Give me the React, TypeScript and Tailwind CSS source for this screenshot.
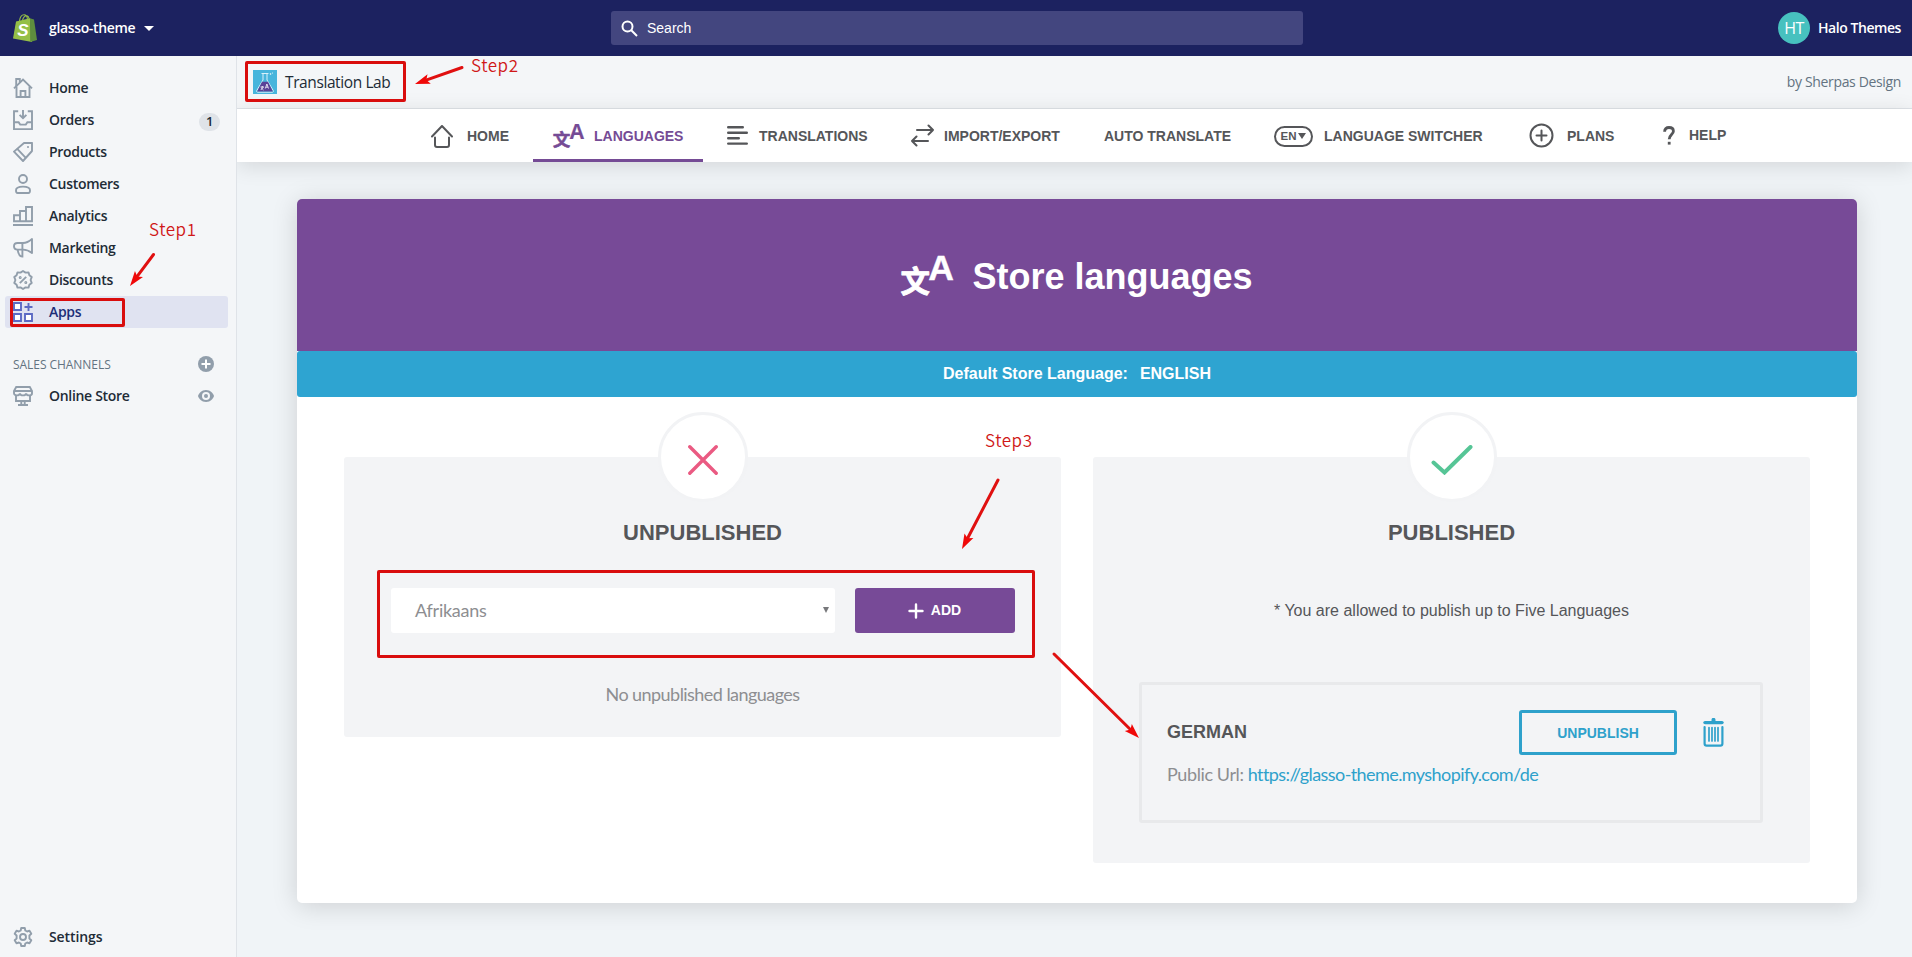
import React from "react";

type IconProps = { className?: string };

const Stroke = ({ children, className = "text-[#919eab]" }: { children: React.ReactNode; className?: string }) => (
  <svg viewBox="0 0 20 20" className={`h-5 w-5 shrink-0 ${className}`} fill="none" stroke="currentColor" strokeWidth="1.9">
    {children}
  </svg>
);

const HomeIcon = () => (
  <Stroke>
    <path d="M1 10.4 10 1.6l9 8.8" />
    <path d="M3.5 8.5V19h13V8.5" />
    <path d="M7.6 19v-6h4.8v6" />
    <path d="M3.2 8V1h3.6v3.6" />
  </Stroke>
);
const OrdersIcon = () => (
  <Stroke>
    <path d="M5.2 1.2H1v17.9h18V1.2h-4.2" />
    <path d="M10 0v7.6M6.6 4.8 10 8.2l3.4-3.4" />
    <path d="M1 12.2h4.6l1.6 2.4h5.6l1.6-2.4H19" />
  </Stroke>
);
const ProductsIcon = () => (
  <Stroke>
    <path d="m11 1 8-.1V9L10 19 1 9.6z" strokeLinejoin="round" />
    <path d="m4 6.6 8.8 9.2" />
    <circle cx="15" cy="5" r=".6" fill="currentColor" strokeWidth="1" />
  </Stroke>
);
const CustomersIcon = () => (
  <Stroke>
    <circle cx="10" cy="5" r="4" />
    <path d="M3 16.2c0-2.4 3.2-3.6 7-3.6s7 1.200 7 3.600c0 1.700-.6 2.800-1.600 2.800H4.600C3.600 19 3 17.900 3 16.200z" />
  </Stroke>
);
const AnalyticsIcon = () => (
  <Stroke>
    <path d="M0 19h20M1 15.200V9.200h6v6zM7 15.200V5h6v10.200zM13 15.200V1h6v14.200z" />
  </Stroke>
);
const MarketingIcon = () => (
  <Stroke>
    <path d="M19 1v14c-3-2.400-5.600-3.400-9-3.400H4.600C2.400 11.600 1 10.200 1 8.300S2.400 5 4.600 5H10c3.400 0 6-1.400 9-4z" strokeLinejoin="round" />
    <path d="M9.400 5v13.600C6.800 18.600 5.200 15.600 4.600 11.600" />
  </Stroke>
);
const DiscountsIcon = () => (
  <Stroke>
    <path d="m10 1 2.500 1.600 3-.2.900 2.800 2.300 1.900-1.100 2.900 1.100 2.900-2.300 1.900-.9 2.800-3-.2L10 19l-2.500-1.600-3 .2-.9-2.800-2.300-1.900L2.400 10 1.300 7.100l2.300-1.900.9-2.800 3 .2z" strokeLinejoin="round" />
    <path d="m6.800 13.200 6.400-6.400" />
    <circle cx="7.200" cy="7.400" r=".9" strokeWidth="1.200" />
    <circle cx="12.800" cy="12.600" r=".9" strokeWidth="1.200" />
  </Stroke>
);
const AppsIcon = () => (
  <Stroke className="text-[#5c6ac4]">
    <path d="M1 1h7v7H1zM1 12h7v7H1zM12 12h7v7h-7z" fill="#fff" />
    <path d="M15.500 1v8M11.500 5h8" />
  </Stroke>
);
const StoreIcon = () => (
  <Stroke>
    <path d="M3.200 1h13.600L19 5v2.200c0 1.400-1.200 2.200-2.800 2.200-1.500 0-2.800-.8-3.100-2-.3 1.200-1.600 2-3.100 2s-2.800-.8-3.100-2c-.3 1.200-1.600 2-3.100 2C2.200 9.400 1 8.600 1 7.200V5z" />
    <path d="M1 5h18M3 9.400V15h14V9.400M8.300 15v3.600M11.700 15v3.600M5 19h10" />
  </Stroke>
);
const SettingsIcon = () => (
  <Stroke>
    <path d="M8.200 1h3.600l.5 2.500 1.800 1 2.400-.8 1.800 3.100-1.900 1.700v3l1.900 1.700-1.800 3.100-2.400-.8-1.800 1-.5 2.500H8.200l-.5-2.500-1.800-1-2.400.8-1.800-3.100 1.900-1.700v-3L1.700 6.800l1.800-3.100 2.400.8 1.800-1z" strokeLinejoin="round" />
    <circle cx="10" cy="10" r="3" />
  </Stroke>
);

const LanguageGlyph = ({ className }: IconProps) => (
  <svg viewBox="0 0 52 43" className={`overflow-visible ${className}`} fill="currentColor">
    <text x="-.5" y="38" fontSize="29.500" fontWeight="700" fontFamily="'Noto Sans CJK SC', sans-serif" stroke="currentColor" strokeWidth=".8" strokeLinejoin="round">文</text>
    <text x="27.200" y="26" fontSize="35.500" fontWeight="700" fontFamily="'Liberation Sans', sans-serif" stroke="currentColor" strokeWidth=".4">A</text>
  </svg>
);

const ShopBag = () => (
  <svg viewBox="0 0 24 28" className="h-7 w-6 shrink-0">
    <path d="M6.500 7C7 3 9 .8 11 .8s3.300 1.700 3.500 5M9.500 6.500C10 3.500 12 1.200 14 1.800c1.400.5 2 2 2.200 3.400" fill="none" stroke="#95bf47" strokeWidth="1.100" />
    <path d="M3 7.600 17 4.200 19 28 0 24.600z" fill="#95bf47" />
    <path d="m17 4.200 4 1.400L24 26l-6.800 2z" fill="#5e8e3e" />
    <text x="4.300" y="22.300" fontSize="17" fontWeight="700" fontStyle="italic" fill="#fff" fontFamily="'Liberation Sans', sans-serif">S</text>
  </svg>
);

const FlaskLogo = () => (
  <svg viewBox="0 0 24 24" className="h-6 w-6 shrink-0">
    <rect width="24" height="24" fill="#47b5dc" />
    <path d="M8.500 3.500h7M10 3.500V10L3.800 20.500c-.5 1 0 1.700 1 1.700h14.400c1 0 1.500-.7 1-1.700L14 10V3.500" fill="none" stroke="#d9f1fa" strokeWidth="1" />
    <path d="M9 11.800h6l4.900 9.600H4.100z" fill="#5b4397" />
    <path d="M7.500 17h3.500M9.300 16v1M7.800 20l2.500-3M8 17.600l2.500 2.400M12.300 18.500l1.600-4.500 1.600 4.500M12.900 17.200h2" stroke="#fff" strokeWidth=".8" fill="none" />
    <circle cx="17.500" cy="4" r=".8" fill="#fff" />
    <circle cx="19.500" cy="3" r=".5" fill="#fff" />
  </svg>
);

const SIDE = [
  { label: "Home", icon: <HomeIcon /> },
  { label: "Orders", icon: <OrdersIcon />, badge: "1" },
  { label: "Products", icon: <ProductsIcon /> },
  { label: "Customers", icon: <CustomersIcon /> },
  { label: "Analytics", icon: <AnalyticsIcon /> },
  { label: "Marketing", icon: <MarketingIcon /> },
  { label: "Discounts", icon: <DiscountsIcon /> },
  { label: "Apps", icon: <AppsIcon />, active: true },
];

const Sidebar = () => (
  <aside className="relative z-10 flex w-[237px] shrink-0 flex-col border-r border-[#dfe3e8] bg-[#f4f6f8] pt-4 font-['Open_Sans','Noto_Sans',sans-serif] text-sm font-[550] tracking-[-0.3px] text-[#212b36]">
    {SIDE.map((s) => (
      <div
        key={s.label}
        className={`ml-[5px] mr-2 flex h-8 items-center rounded-[3px] pl-2 ${s.active ? "bg-[#e0e3f1] text-[#202e78]" : ""}`}
      >
        {s.icon}
        <span className="ml-4 grow">{s.label}</span>
        {s.badge && (
          <span className="mr-2 mt-[3px] flex h-[18px] w-[21px] items-center justify-center rounded-full bg-[#dfe3e8] text-[13px]">{s.badge}</span>
        )}
      </div>
    ))}
    <div className="mt-5 flex h-8 items-center pl-[13px] pr-[22px]">
      <span className="mt-0.5 grow text-xs font-normal tracking-[-0.05px] text-[#637381]">SALES CHANNELS</span>
      <svg viewBox="0 0 16 16" className="h-4 w-4">
        <circle cx="8" cy="8" r="8" fill="#919eab" />
        <path d="M8 3.500v9M3.500 8h9" stroke="#fff" strokeWidth="2" />
      </svg>
    </div>
    <div className="flex h-8 items-center pl-[13px] pr-[22px]">
      <StoreIcon />
      <span className="ml-4 grow">Online Store</span>
      <svg viewBox="0 0 16 12" className="h-3 w-4">
        <path d="M8 0C3.500 0 .8 3.500 0 6c.8 2.500 3.500 6 8 6s7.200-3.500 8-6c-.8-2.500-3.500-6-8-6z" fill="#919eab" />
        <circle cx="8" cy="6" r="4" fill="#f4f6f8" />
        <circle cx="8" cy="6" r="2" fill="#919eab" />
      </svg>
    </div>
    <div className="mb-1 mt-auto flex h-8 items-center pl-[13px]">
      <SettingsIcon />
      <span className="ml-4 tracking-[-0.1px]">Settings</span>
    </div>
  </aside>
);

const TopBar = () => (
  <header className="flex h-14 shrink-0 items-center bg-[#1c2260] font-['Open_Sans','Noto_Sans',sans-serif] text-sm font-semibold text-white">
    <div className="flex w-[611px] items-center pl-[13px]">
      <ShopBag />
      <span className="ml-3 w-[87px] whitespace-nowrap tracking-[-0.35px]">glasso-theme</span>
      <svg viewBox="0 0 10 5" className="ml-[8px] h-[5px] w-[10px]"><path d="M0 0h10L5 5z" fill="#fff" /></svg>
    </div>
    <div className="flex h-[34px] w-[692px] items-center rounded-[3px] bg-[#43467f] pl-[10px]">
      <svg viewBox="0 0 17 17" className="h-[17px] w-[17px]" fill="none" stroke="#fff" strokeWidth="2">
        <circle cx="6.500" cy="6.500" r="5" />
        <path d="m10.300 10.300 5.700 5.700" />
      </svg>
      <span className="ml-[9px] font-['Liberation_Sans',sans-serif] text-sm font-normal">Search</span>
    </div>
    <div className="ml-auto flex items-center pr-[11px]">
      <span className="flex h-8 w-8 items-center justify-center rounded-full bg-[#47c1bf] text-base font-normal tracking-[-0.5px]">HT</span>
      <span className="ml-[8px] w-[83px] whitespace-nowrap tracking-[-0.45px]">Halo Themes</span>
    </div>
  </header>
);

const NavBar = () => (
  <nav className="flex h-[53px] items-center bg-white font-['Liberation_Sans',sans-serif] text-sm font-bold whitespace-nowrap text-[#555659] shadow-[0_4px_22px_rgba(0,0,0,0.12)]">
    <div className="ml-[194px] flex items-center">
      <svg viewBox="0 0 22 23" className="mt-px h-[23px] w-[22px]" fill="none" stroke="currentColor" strokeWidth="2" strokeLinecap="round" strokeLinejoin="round">
        <path d="M1 11.500 11 1l10 10.500M4 12.500V20c0 1.200.8 2 2 2h10c1.200 0 2-.8 2-2v-7.500" />
      </svg>
      <span className="ml-[14px] w-[42px]">HOME</span>
    </div>
    <div className="ml-6 flex h-[53px] w-[170px] items-center border-b-[3px] border-[#754b95] pl-5 pt-[3px] text-[#754b95]">
      <LanguageGlyph className="h-[26px] w-[31px]" />
      <span className="ml-[10px]">LANGUAGES</span>
    </div>
    <div className="ml-6 flex items-center">
      <svg viewBox="0 0 21 19" className="h-[19px] w-[21px]" stroke="currentColor" strokeWidth="2.400" strokeLinecap="round">
        <path d="M1.200 1.300h14.600M1.200 6.700h18.600M1.200 12.200h10.600M1.200 17.600h18.600" />
      </svg>
      <span className="ml-[11px] w-[108px]">TRANSLATIONS</span>
    </div>
    <div className="ml-11 flex items-center">
      <svg viewBox="0 0 23 23" className="h-[23px] w-[23px]" fill="none" stroke="currentColor" strokeWidth="2" strokeLinecap="round" strokeLinejoin="round">
        <path d="M6 6h16M17.500 1.500 22 6l-4.500 4.500M17 17H1M5.500 12.500 1 17l4.500 4.500" />
      </svg>
      <span className="ml-[10px] w-[116px]">IMPORT/EXPORT</span>
    </div>
    <span className="ml-11 w-[127px]">AUTO TRANSLATE</span>
    <div className="ml-[43px] flex items-center">
      <span className="mt-px flex h-[21px] w-[39px] items-center justify-center gap-[2px] rounded-full border-2 border-[#555659] text-[11.500px]">
        EN
        <svg viewBox="0 0 8 6" className="h-[6px] w-2"><path d="M0 0h8L4 6z" fill="currentColor" /></svg>
      </span>
      <span className="ml-[11px] w-[159px]">LANGUAGE SWITCHER</span>
    </div>
    <div className="ml-[46px] flex items-center">
      <svg viewBox="0 0 25 25" className="h-[25px] w-[25px]" fill="none" stroke="currentColor" strokeWidth="2" strokeLinecap="round">
        <circle cx="12.500" cy="12.500" r="11" />
        <path d="M12.500 7.500v10M7.500 12.500h10" />
      </svg>
      <span className="ml-[13px] w-[48px]">PLANS</span>
    </div>
    <div className="ml-[48px] flex items-center">
      <svg viewBox="0 0 12 19" className="h-[19px] w-3" fill="none" stroke="currentColor" strokeWidth="2.800">
        <path d="M1.600 5.800C1.600 3 3.300 1.500 6 1.500s4.400 1.500 4.400 3.700c0 3.200-4.200 3.600-4.200 8" />
        <path d="M4.800 17.200h2.800" />
      </svg>
      <span className="ml-[14px] -mt-0.5">HELP</span>
    </div>
  </nav>
);

const Medallion = ({ children }: { children: React.ReactNode }) => (
  <div className="-mt-[45px] ml-[313.500px] flex h-[90px] w-[90px] items-center justify-center self-start rounded-full border-[3px] border-[#f2f3f5] bg-white pt-[6px]">{children}</div>
);

const panel = "flex flex-col items-center rounded-[3px] bg-[#f3f4f6]";
const heading = "mt-[18px] text-[22px] leading-[26px] font-bold text-[#555659]";

const LanguagesCard = () => (
  <section className="ml-[60px] mt-[37px] h-[704px] w-[1560px] rounded-[5px] bg-white font-['Liberation_Sans',sans-serif] shadow-[0_3px_26px_rgba(0,0,0,0.15)]">
    <div className="flex h-[152px] items-center justify-center rounded-t-[5px] bg-[#774a97] text-white">
      <LanguageGlyph className="mr-5 h-[43px] w-[52px]" />
      <h1 className="mt-1 w-[281px] text-4xl font-bold whitespace-nowrap">Store languages</h1>
    </div>
    <div className="flex h-[46px] items-center justify-center gap-3 rounded-[3px] bg-[#2ea4d1] pb-px text-base font-bold text-white">
      <span>Default Store Language:</span>
      <span>ENGLISH</span>
    </div>
    <div className="flex items-start gap-8 px-[47px] pt-[60px]">
      <div className={`${panel} h-[280px] w-[717px]`}>
        <Medallion>
          <svg viewBox="0 0 30 30" className="h-[30px] w-[30px]" stroke="#ea5a82" strokeWidth="3.400" strokeLinecap="round"><path d="m1.800 1.800 26.400 26.400M28.200 1.800 1.800 28.200" /></svg>
        </Medallion>
        <h2 className={heading}>UNPUBLISHED</h2>
        <div className="mt-[42px] flex w-full pl-[47px]">
          <div className="flex h-[45px] w-[444px] items-center justify-between rounded-[3px] bg-white pl-6 pr-[6px] font-['Lato',sans-serif] text-lg tracking-[-0.25px] text-[#8d8e91]">
            <span className="-mt-0.5">Afrikaans</span>
            <svg viewBox="0 0 6 6" className="-mt-[2px] h-[6px] w-[6px]"><path d="M0 0h6L3 6z" fill="#77787b" /></svg>
          </div>
          <button className="ml-5 flex h-[45px] w-40 items-center justify-center rounded-[3px] bg-[#774a97] pr-px text-sm font-bold text-white">
            <svg viewBox="0 0 16 16" className="mr-[7px] h-4 w-4" stroke="#fff" strokeWidth="2.400" strokeLinecap="round"><path d="M8 1.500v13M1.500 8h13" /></svg>
            <span className="-mt-0.5">ADD</span>
          </button>
        </div>
        <p className="mt-[47px] font-['Lato',sans-serif] text-lg tracking-[-0.55px] text-[#8d8e91]">No unpublished languages</p>
      </div>
      <div className={`${panel} h-[406px] w-[717px]`}>
        <Medallion>
          <svg viewBox="0 0 42 30" className="h-[30px] w-[42px]" fill="none" stroke="#56c596" strokeWidth="4" strokeLinecap="round"><path d="m2.500 17.500 11 10L39.500 2" /></svg>
        </Medallion>
        <h2 className={heading}>PUBLISHED</h2>
        <p className="mt-[53px] text-base text-[#555659]">* You are allowed to publish up to Five Languages</p>
        <div className="ml-[46px] mt-[59px] h-[141px] w-[624px] self-start rounded-[3px] border-[3px] border-[#e8e9eb] pl-[25px] pt-[25px]">
          <div className="flex h-[45px] items-center">
            <h3 className="-mt-0.5 grow text-lg font-bold text-[#555659]">GERMAN</h3>
            <button className="flex h-[45px] w-[158px] items-center justify-center rounded-[3px] border-[3px] border-[#2ea1cb] text-sm font-bold text-[#2ea1cb]">UNPUBLISH</button>
            <svg viewBox="0 0 21 29" className="ml-[26px] mr-[36px] h-[29px] w-[21px]" fill="none" stroke="#2ea1cb" strokeLinecap="round">
              <path d="M2 4.600h17" strokeWidth="3.400" />
              <path d="M10.500 3V1.800" strokeWidth="4" />
              <path d="M1.600 9v16.400c0 1.300.8 2.200 2 2.200h13.800c1.200 0 2-.9 2-2.200V9" strokeWidth="2.200" />
              <path d="M6 9.500v13.500M9 9.500v13.500M12 9.500v13.500M15 9.500v13.500" strokeWidth="1.700" />
            </svg>
          </div>
          <p className="mt-[5px] font-['Lato',sans-serif] text-lg tracking-[-0.4px] whitespace-nowrap text-[#8d8e91]">
            Public Url: <span className="tracking-[-0.58px] text-[#2ea1cb]">https://glasso-theme.myshopify.com/de</span>
          </p>
        </div>
      </div>
    </div>
  </section>
);

const Arrow = ({ x1, y1, x2, y2, width = 3 }: { x1: number; y1: number; x2: number; y2: number; width?: number }) => {
  const len = Math.hypot(x2 - x1, y2 - y1);
  const ux = (x2 - x1) / len;
  const uy = (y2 - y1) / len;
  const head = 15;
  const bx = x2 - ux * head;
  const by = y2 - uy * head;
  return (
    <g>
      <path d={`M${x1} ${y1}L${bx + ux * 4} ${by + uy * 4}`} stroke="#e01010" strokeWidth={width} strokeLinecap="round" />
      <path
        d={`M${x2} ${y2}L${bx - uy * 5} ${by + ux * 5}L${bx + ux * 3} ${by + uy * 3}L${bx + uy * 5} ${by - ux * 5}z`}
        fill="#f00808"
      />
    </g>
  );
};

const stepText = "absolute font-['Noto_Sans_CJK_SC',sans-serif] text-[17px] leading-6 font-[350] tracking-[0.55px] text-[#d01818] whitespace-nowrap";
const frame = "absolute rounded-[2px] border-[3px] border-[#d90d0d]";

const Annotations = () => (
  <div className="pointer-events-none absolute inset-0 z-20">
    <div className={`${frame} left-[10px] top-[298px] h-[29px] w-[115px]`} />
    <div className={`${frame} left-[245px] top-[61px] h-[41px] w-[161px]`} />
    <div className={`${frame} left-[377px] top-[570px] h-[88px] w-[658px]`} />
    <span className={`${stepText} left-[149px] top-[217px]`}>Step1</span>
    <span className={`${stepText} left-[471px] top-[53px]`}>Step2</span>
    <span className={`${stepText} left-[985px] top-[428px]`}>Step3</span>
    <svg viewBox="0 0 1912 957" className="absolute inset-0 h-[957px] w-[1912px]" fill="none">
      <Arrow x1={153.500} y1={254.500} x2={130} y2={286} />
      <Arrow x1={462} y1={67.500} x2={415} y2={84} />
      <Arrow x1={998} y1={480} x2={962} y2={549} />
      <Arrow x1={1054} y1={654} x2={1139} y2={738} />
    </svg>
  </div>
);

export default function App() {
  return (
    <div className="relative flex h-[957px] w-[1912px] flex-col overflow-hidden">
      <TopBar />
      <div className="flex grow">
        <Sidebar />
        <main className="grow bg-[#f0f4f7]">
          <div className="flex h-[53px] items-center border-b border-[#dfe3e8] bg-[#f4f6f8] pl-4 pr-[11px] font-['Open_Sans','Noto_Sans',sans-serif]">
            <FlaskLogo />
            <span className="ml-2 mt-0.5 grow text-[15.500px] tracking-[-0.4px] text-[#212b36]">Translation Lab</span>
            <span className="text-sm tracking-[-0.35px] text-[#637381]">by Sherpas Design</span>
          </div>
          <NavBar />
          <LanguagesCard />
        </main>
      </div>
      <Annotations />
    </div>
  );
}
